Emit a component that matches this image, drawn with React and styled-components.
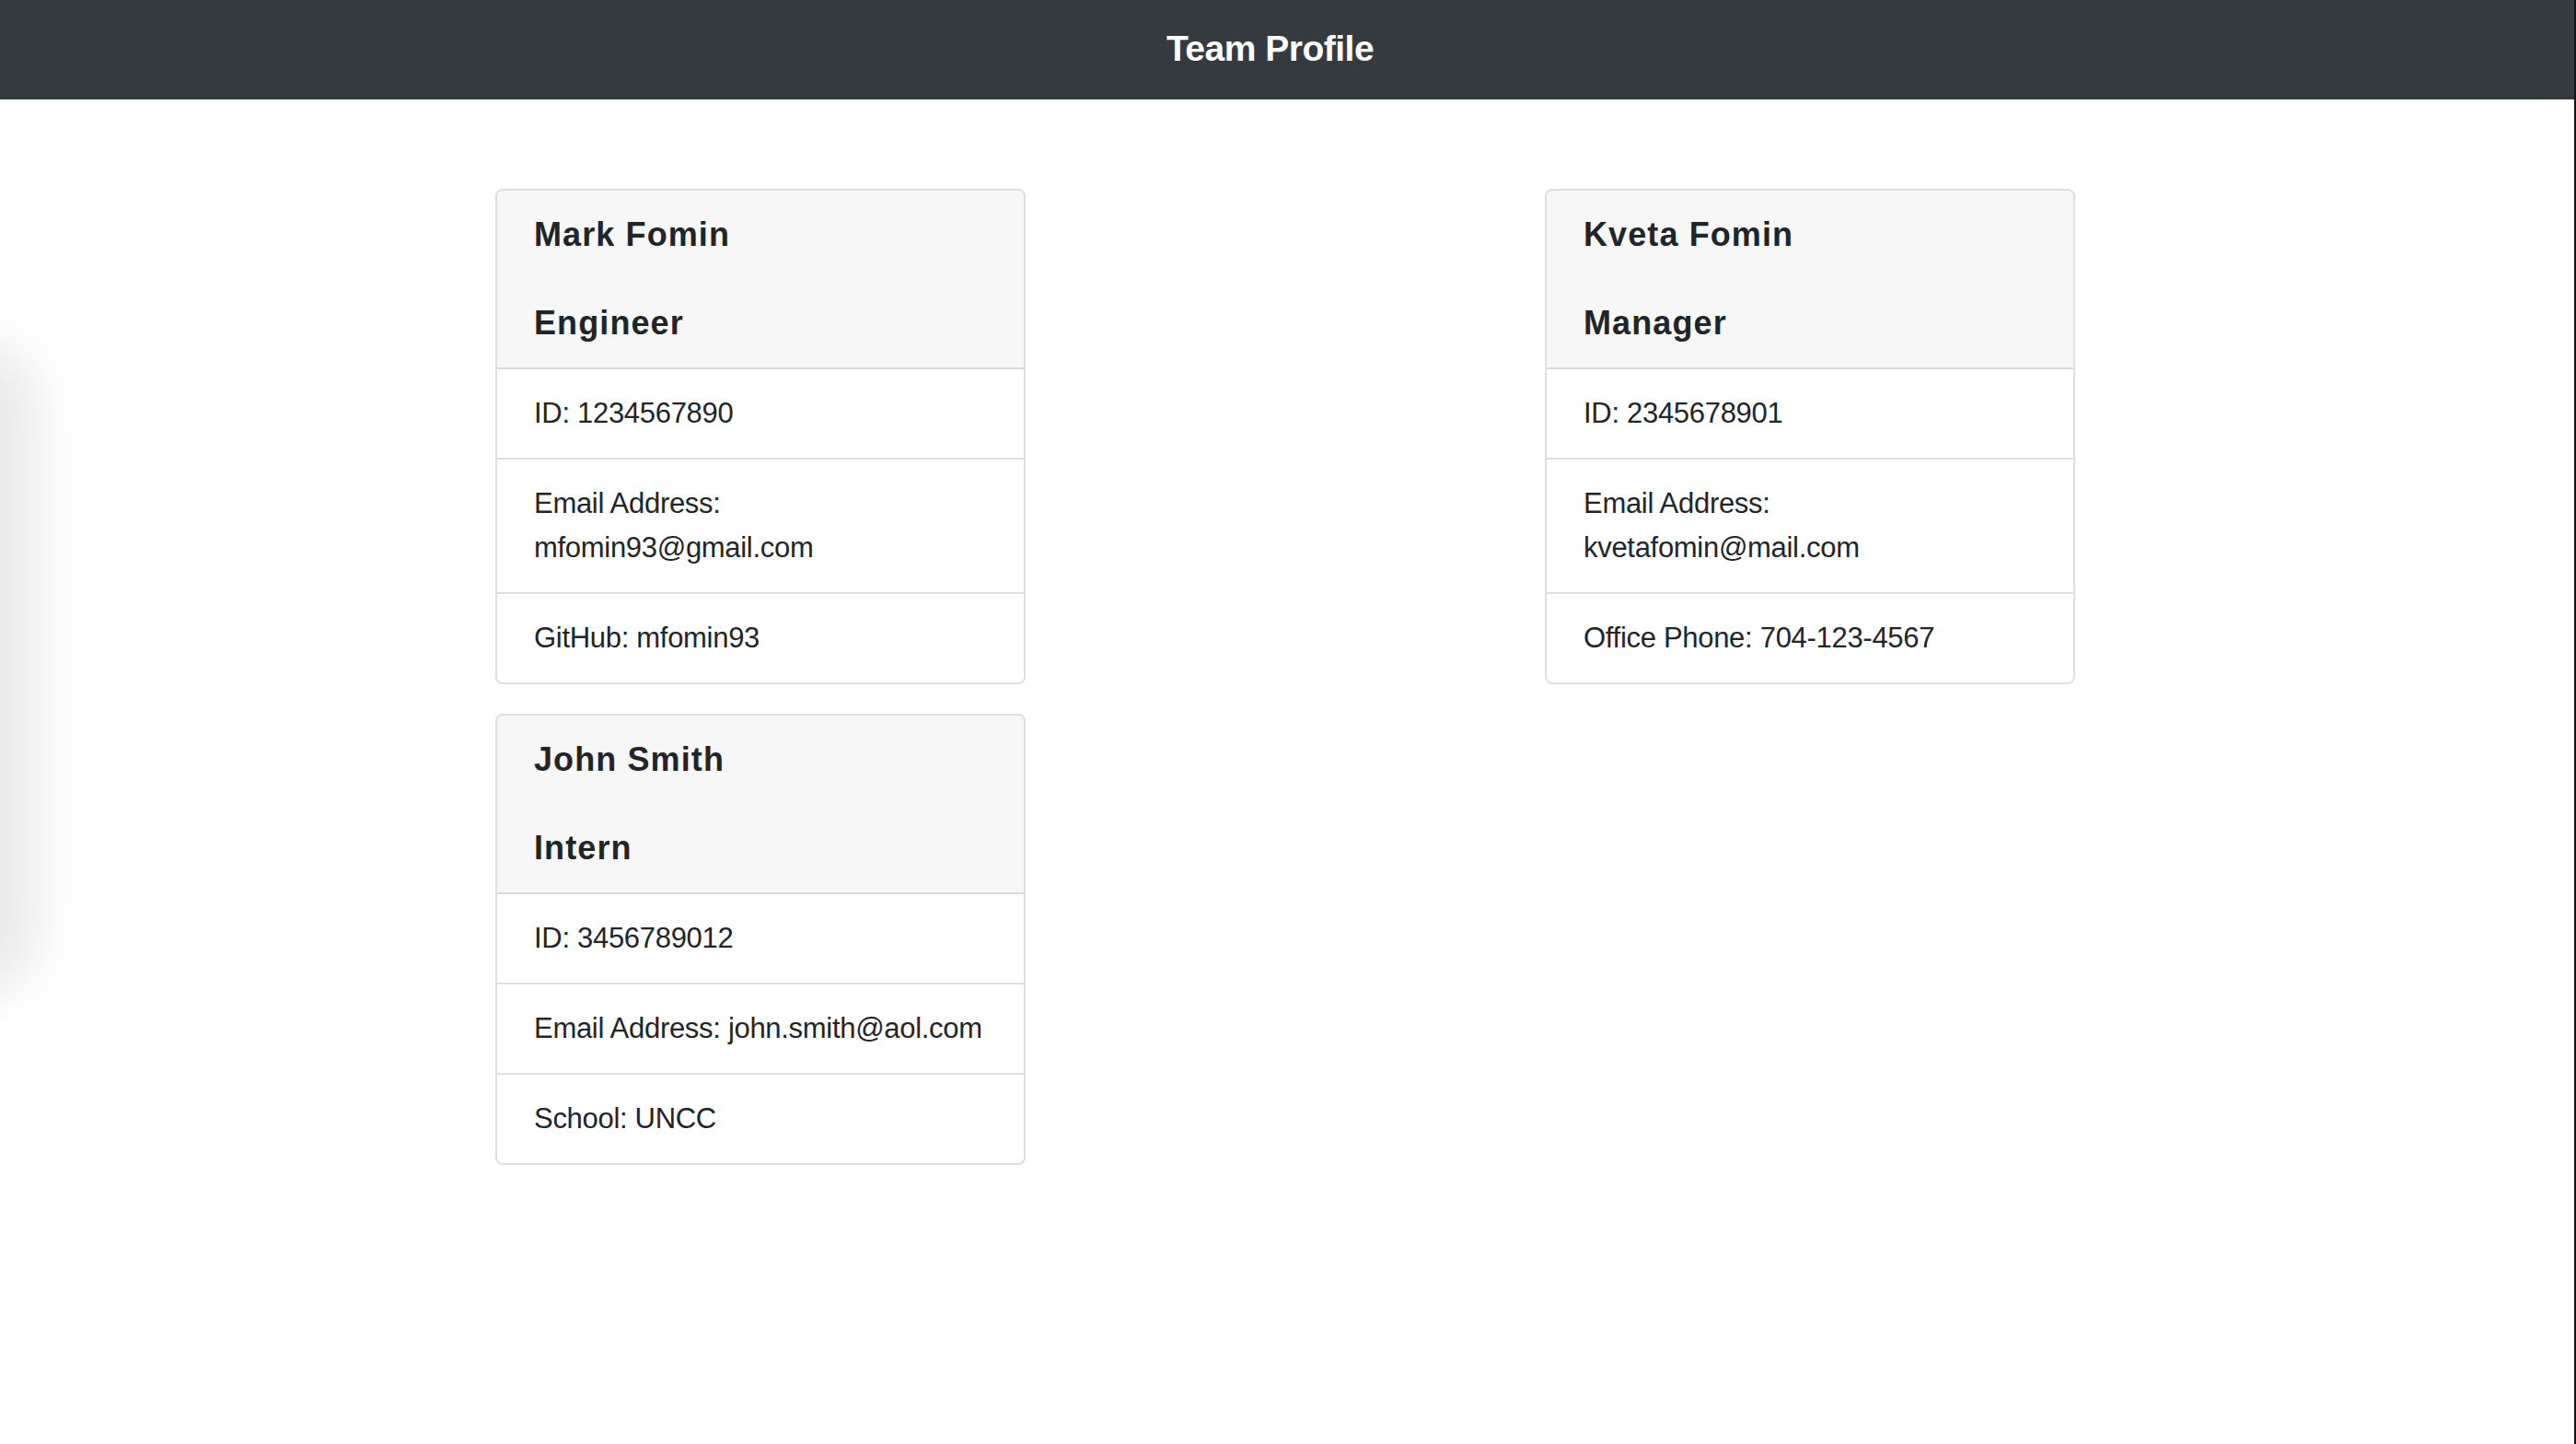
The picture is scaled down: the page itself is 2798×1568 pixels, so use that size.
import React from "react";
import styled, { createGlobalStyle } from "styled-components";

const GlobalStyle = createGlobalStyle`
  html, body {
    margin: 0;
    padding: 0;
    background: #ffffff;
  }
  body {
    font-family: "Liberation Sans", Arial, sans-serif;
    color: #212529;
  }
  * { box-sizing: border-box; }
`;

const Page = styled.div`
  min-height: 1568px;
  border-right: 2px solid #141414;
  position: relative;
  overflow: hidden;
`;

const Shade = styled.div`
  position: absolute;
  left: -90px;
  top: 370px;
  width: 130px;
  height: 710px;
  border-radius: 65px;
  background: #000;
  opacity: 0.085;
  filter: blur(28px);
  pointer-events: none;
`;

const TopBar = styled.header`
  height: 108px;
  background: #343a40;
  display: flex;
  align-items: center;
  justify-content: center;
  padding: 0 37px 3px 0;
`;

const Title = styled.h1`
  margin: 0;
  color: #ffffff;
  font-family: "Liberation Sans", Arial, sans-serif;
  font-size: 39px;
  font-weight: 700;
  line-height: 1;
  letter-spacing: -0.5px;
`;

const Main = styled.main`
  display: flex;
  align-items: flex-start;
  gap: 564px;
  padding: 97px 0 0 538px;
`;

const Column = styled.div`
  display: flex;
  flex-direction: column;
  gap: 32px;
`;

const Card = styled.section`
  width: 576px;
  border: 2px solid rgba(0, 0, 0, 0.125);
  border-radius: 8px;
  overflow: hidden;
  background: #ffffff;
`;

const CardHeader = styled.div`
  background: rgba(0, 0, 0, 0.03);
  padding: 24px 40px;
  border-bottom: 2px solid rgba(0, 0, 0, 0.125);
`;

const Name = styled.h2`
  margin: 0 0 48px;
  font-size: 36px;
  font-weight: 700;
  line-height: 48px;
  letter-spacing: 1.1px;
  color: #212529;
`;

const Role = styled.h3`
  margin: 0;
  font-size: 36px;
  font-weight: 700;
  line-height: 48px;
  letter-spacing: 1.1px;
  color: #212529;
`;

const List = styled.ul`
  list-style: none;
  margin: 0;
  padding: 0;
`;

const Item = styled.li`
  padding: 24px 40px;
  font-size: 31px;
  line-height: 48px;
  letter-spacing: -0.3px;
  border-bottom: 2px solid rgba(0, 0, 0, 0.125);
  &:last-child {
    border-bottom: 0;
  }
`;

const EmailLine = styled.span`
  overflow-wrap: break-word;
`;

const team = {
  left: [
    {
      name: "Mark Fomin",
      role: "Engineer",
      id: "1234567890",
      email: "mfomin93@gmail.com",
      extra: "GitHub: mfomin93",
    },
    {
      name: "John Smith",
      role: "Intern",
      id: "3456789012",
      email: "john.smith@aol.com",
      extra: "School: UNCC",
    },
  ],
  right: [
    {
      name: "Kveta Fomin",
      role: "Manager",
      id: "2345678901",
      email: "kvetafomin@mail.com",
      extra: "Office Phone: 704-123-4567",
    },
  ],
};

function MemberCard({ m }) {
  return (
    <Card>
      <CardHeader>
        <Name>{m.name}</Name>
        <Role>{m.role}</Role>
      </CardHeader>
      <List>
        <Item>ID: {m.id}</Item>
        <Item>
          <EmailLine>Email Address: {m.email}</EmailLine>
        </Item>
        <Item>{m.extra}</Item>
      </List>
    </Card>
  );
}

export default function App() {
  return (
    <>
      <GlobalStyle />
      <Page>
        <TopBar>
          <Title>Team Profile</Title>
        </TopBar>
        <Main>
          <Column>
            {team.left.map((m) => (
              <MemberCard key={m.id} m={m} />
            ))}
          </Column>
          <Column>
            {team.right.map((m) => (
              <MemberCard key={m.id} m={m} />
            ))}
          </Column>
        </Main>
        <Shade />
      </Page>
    </>
  );
}
